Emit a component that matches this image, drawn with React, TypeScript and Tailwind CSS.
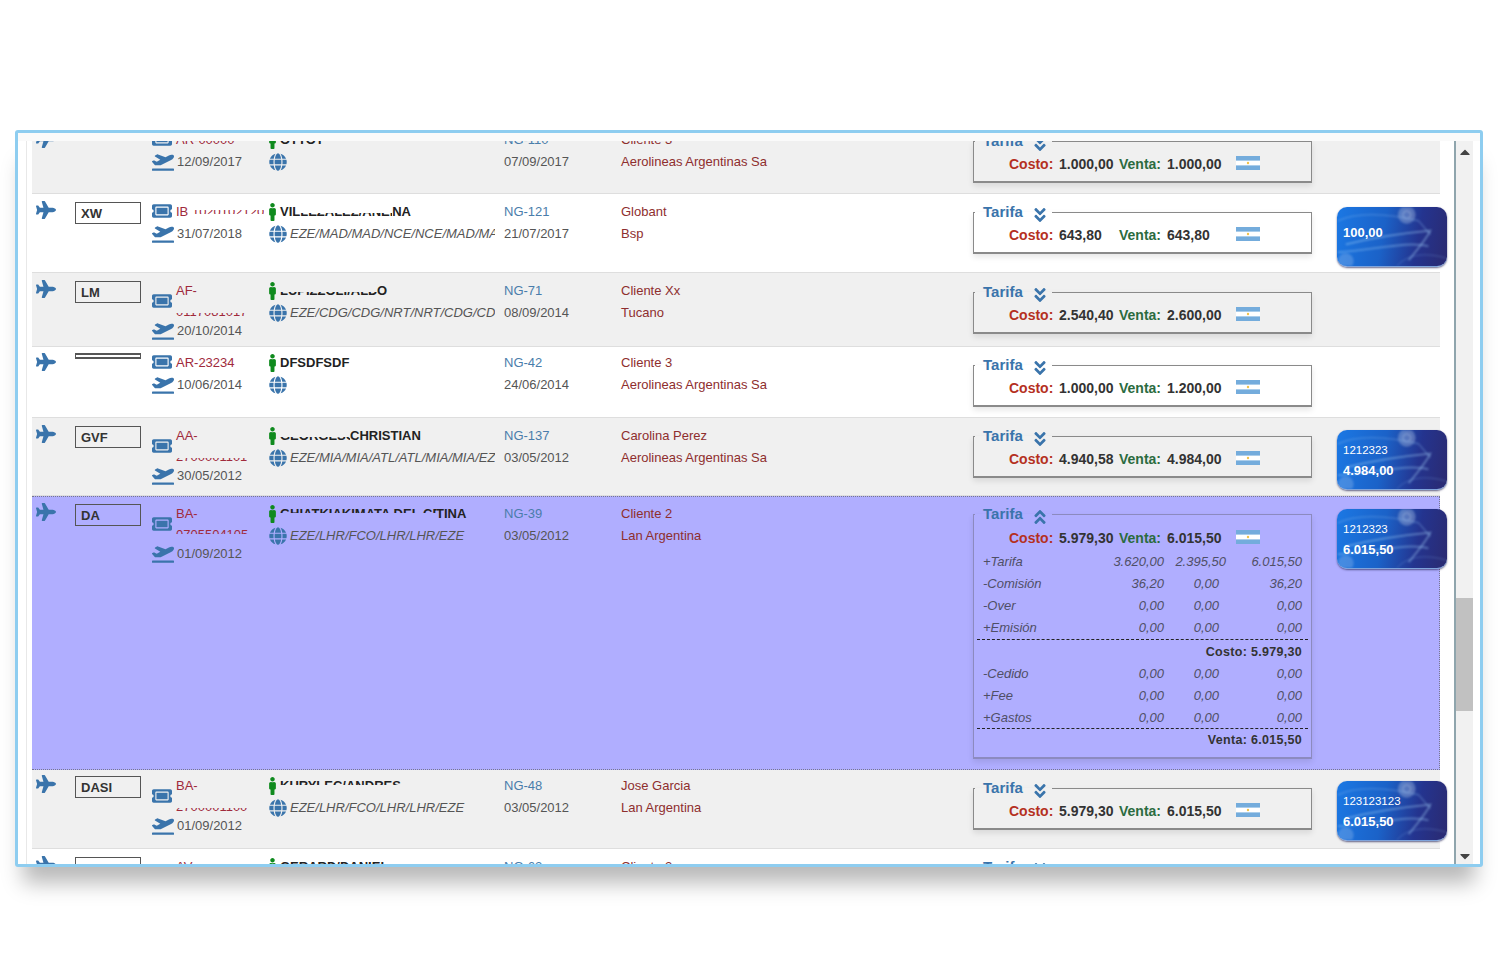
import type { ReactNode } from 'react'
import { FaPlane, FaTicketAlt, FaGlobe, FaMale, FaAngleDoubleDown, FaAngleDoubleUp, FaCaretUp, FaCaretDown, FaPlaneDeparture } from 'react-icons/fa'

// half-erased text from the screenshot: the line keeps its width, only a band shows
const lower = 'inline-block align-top whitespace-nowrap leading-[22px] [clip-path:inset(12px_0_2px_0)]'
const upper = 'inline-block align-top whitespace-nowrap leading-[22px] [clip-path:inset(5px_0_12px_0)]'
const band = 'inline-block align-top whitespace-nowrap leading-[22px] [clip-path:inset(9px_0_9px_0)]'

interface Row {
  height: string
  bg: string
  code: string
  codeBox?: string
  up?: string
  textTop?: string
  tarifaTop: string
  ticket: ReactNode
  wrapped?: boolean
  date: string
  pax: ReactNode
  route: string
  ng: string
  ngDate: string
  client: string
  airline: string
  costo: string
  venta: string
  card?: string[]
  cardTop?: string
  open?: boolean
}

const rows: Row[] = [
  {
    height: 'h-[71px]', bg: 'bg-[#f0f0f0]', code: '', codeBox: 'invisible h-[22px]', textTop: 'pt-[6px]', tarifaTop: 'pt-[8px]',
    ticket: 'AR-00000', date: '12/09/2017', pax: 'OTTOT', route: '', ng: 'NG-110', ngDate: '07/09/2017',
    client: 'Cliente 3', airline: 'Aerolineas Argentinas Sa', costo: '1.000,00', venta: '1.000,00',
  },
  {
    height: 'h-[79px]', bg: 'bg-white', code: 'XW', tarifaTop: 'pt-[8px]',
    ticket: <>IB <span className={band}>1020102120</span></>, date: '31/07/2018',
    pax: <>VIL<span className={`${lower} w-[92px] overflow-hidden`}>LEZALEZ/ANELIANA</span>NA</>,
    route: 'EZE/MAD/MAD/NCE/NCE/MAD/MAD/EZE', ng: 'NG-121', ngDate: '21/07/2017',
    client: 'Globant', airline: 'Bsp', costo: '643,80', venta: '643,80', card: ['100,00'], cardTop: 'mt-[13px]',
  },
  {
    height: 'h-[74px]', bg: 'bg-[#f0f0f0]', code: 'LM', tarifaTop: 'pt-[9px]', wrapped: true,
    ticket: <>AF-<br /><span className={lower}>0117081017</span></>, date: '20/10/2014',
    pax: <><span className={`${lower} w-[97px] overflow-hidden`}>LUPIZZOLI/ALDO</span>O</>,
    route: 'EZE/CDG/CDG/NRT/NRT/CDG/CDG/EZE', ng: 'NG-71', ngDate: '08/09/2014',
    client: 'Cliente Xx', airline: 'Tucano', costo: '2.540,40', venta: '2.600,00',
  },
  {
    height: 'h-[71px]', bg: 'bg-white', code: '', codeBox: 'h-[6px] -mt-[1px] border-y-2', up: '-mt-[1px]', textTop: 'pt-[6px]', tarifaTop: 'pt-[8px]',
    ticket: 'AR-23234', date: '10/06/2014', pax: 'DFSDFSDF', route: '', ng: 'NG-42', ngDate: '24/06/2014',
    client: 'Cliente 3', airline: 'Aerolineas Argentinas Sa', costo: '1.000,00', venta: '1.200,00',
  },
  {
    height: 'h-[78px]', bg: 'bg-[#f0f0f0]', code: 'GVF', tarifaTop: 'pt-[8px]', wrapped: true,
    ticket: <>AA-<br /><span className={lower}>2700001101</span></>, date: '30/05/2012',
    pax: <><span className={`${lower} w-[70px] overflow-hidden`}>GEORGESCU/</span>CHRISTIAN</>,
    route: 'EZE/MIA/MIA/ATL/ATL/MIA/MIA/EZE', ng: 'NG-137', ngDate: '03/05/2012',
    client: 'Carolina Perez', airline: 'Aerolineas Argentinas Sa', costo: '4.940,58', venta: '4.984,00',
    card: ['1212323', '4.984,00'], cardTop: 'mt-[12px]',
  },
  {
    height: 'h-[274px]', bg: 'bg-[#b0aeff]', code: 'DA', up: '-mt-[1px]', tarifaTop: 'pt-[7px]', wrapped: true, open: true,
    ticket: <>BA-<br /><span className={upper}>0705504105</span></>, date: '01/09/2012',
    pax: <><span className={`${upper} w-[156px] overflow-hidden`}>GHIATKIAKIMATA DEL CRIS</span>TINA</>,
    route: 'EZE/LHR/FCO/LHR/LHR/EZE', ng: 'NG-39', ngDate: '03/05/2012',
    client: 'Cliente 2', airline: 'Lan Argentina', costo: '5.979,30', venta: '6.015,50',
    card: ['1212323', '6.015,50'], cardTop: 'mt-[12px]',
  },
  {
    height: 'h-[79px]', bg: 'bg-[#f0f0f0]', code: 'DASI', up: '-mt-[2px]', tarifaTop: 'pt-[8px]', wrapped: true,
    ticket: <>BA-<br /><span className={lower}>2700001100</span></>, date: '01/09/2012',
    pax: <span className={upper}>KURYLEC/ANDRES</span>,
    route: 'EZE/LHR/FCO/LHR/LHR/EZE', ng: 'NG-48', ngDate: '03/05/2012',
    client: 'Jose Garcia', airline: 'Lan Argentina', costo: '5.979,30', venta: '6.015,50',
    card: ['123123123', '6.015,50'], cardTop: 'mt-[11px]',
  },
  {
    height: 'h-[78px]', bg: 'bg-white', code: 'FAFFFW', tarifaTop: 'pt-[8px]', wrapped: true,
    ticket: <>AV-<br />0000000000</>, date: '01/09/2012', pax: 'GERARD/DANIEL',
    route: 'EZE/LHR/FCO/LHR/LHR/EZE', ng: 'NG-62', ngDate: '03/05/2012',
    client: 'Cliente 2', airline: 'Lan Argentina', costo: '5.979,30', venta: '6.015,50',
  },
]

const breakdownTop = [
  ['+Tarifa', '3.620,00', '2.395,50', '6.015,50'],
  ['-Comisión', '36,20', '0,00', '36,20'],
  ['-Over', '0,00', '0,00', '0,00'],
  ['+Emisión', '0,00', '0,00', '0,00'],
]
const breakdownBottom = [
  ['-Cedido', '0,00', '0,00', '0,00'],
  ['+Fee', '0,00', '0,00', '0,00'],
  ['+Gastos', '0,00', '0,00', '0,00'],
]

function Flag() {
  return (
    <svg width="24" height="14" viewBox="0 0 24 14" className="shrink-0 -mt-[3px]">
      <rect width="24" height="14" fill="#fff" />
      <rect width="24" height="4.6" fill="#74acdc" />
      <rect y="9.4" width="24" height="4.6" fill="#74acdc" />
      <circle cx="12" cy="7" r="1.2" fill="#f0c24a" />
    </svg>
  )
}

function Card({ lines }: { lines: string[] }) {
  return (
    <div className="relative w-[110px] h-[60px] rounded-[10px] overflow-hidden bg-[linear-gradient(100deg,#1b78e4_0%,#1b62c8_42%,#24348f_72%,#2b2a70_100%)] shadow-[0_1px_2px_rgba(40,40,90,0.7)] border-b border-[#7fa4dc] text-white">
      <svg viewBox="0 0 110 60" className="absolute inset-0 w-full h-full blur-[1px]">
        <circle cx="70" cy="8" r="9" fill="#a9bde0" opacity="0.4" />
        <circle cx="70" cy="8" r="4" fill="none" stroke="#dbe6f7" strokeWidth="1" opacity="0.4" />
        <circle cx="8" cy="55" r="8" fill="#a9c8ee" opacity="0.3" />
        <path d="M0 46 C35 44 72 34 92 40" stroke="#9ccaf5" strokeWidth="2" fill="none" opacity="0.4" />
        <path d="M8 38 C40 30 72 26 94 24 C90 32 82 42 72 54" stroke="#a5d0f7" strokeWidth="1.8" fill="none" opacity="0.45" />
        <path d="M0 14 C22 4 56 8 82 14 L94 28" stroke="#8dbcf0" strokeWidth="1.4" fill="none" opacity="0.35" />
        <path d="M60 60 C70 48 90 46 110 52" stroke="#8dbcf0" strokeWidth="1" fill="none" opacity="0.3" />
      </svg>
      {lines.length === 1 ? (
        <div className="absolute left-[6px] top-[18px] text-[13px] leading-[16px] font-bold">{lines[0]}</div>
      ) : (
        <div className="absolute left-[6px] top-[10px]">
          <div className="text-[11.5px] leading-[20px]">{lines[0]}</div>
          <div className="text-[13px] leading-[22px] font-bold">{lines[1]}</div>
        </div>
      )}
    </div>
  )
}

function Breakdown({ items }: { items: string[][] }) {
  return (
    <>
      {items.map((b) => (
        <div key={b[0]} className="flex h-[22px] items-center italic text-[13px] text-[#4f4f66] pl-[9px]">
          <span className="w-[100px]">{b[0]}</span>
          <span className="w-[81px] text-right">{b[1]}</span>
          <span className="w-[55px] text-right">
            <span className={b[2].length > 4 ? '-mr-[7px] inline-block' : ''}>{b[2]}</span>
          </span>
          <span className="w-[83px] text-right">{b[3]}</span>
        </div>
      ))}
    </>
  )
}

function Tarifa({ row }: { row: Row }) {
  return (
    <fieldset className={`w-[339px] border border-b-2 shadow-[0_3px_6px_rgba(0,0,0,0.1)] ${row.open ? 'border-[#8c8abf] pb-[5px]' : 'border-[#8a8a8a] pb-[3px]'}`}>
      <legend className="ml-[1px] pl-[8px] pr-[3px] h-[20px] flex items-center gap-[8px] text-[15px] font-bold text-[#3a74ab]">
        Tarifa
        {row.open ? <FaAngleDoubleUp size={18} className="mt-[5px]" /> : <FaAngleDoubleDown size={18} className="mt-[5px]" />}
      </legend>
      <div className={`flex items-center pl-[35px] text-[14px] font-bold text-[#333] ${row.open ? 'h-[28px]' : 'h-[27px]'}`}>
        <span className="w-[50px] text-[#b5301f]">Costo:</span>
        <span className="w-[60px]">{row.costo}</span>
        <span className="w-[48px] text-[#2b6b3f]">Venta:</span>
        <span className="w-[69px]">{row.venta}</span>
        <Flag />
      </div>
      {row.open && (
        <div className="-mt-[1px]">
          <Breakdown items={breakdownTop} />
          <div className="mx-[3px] border-t border-dashed border-[#222]" />
          <div className="h-[23px] pt-[1px] flex items-center justify-end pr-[9px] text-[12.5px] font-bold tracking-[0.3px] text-[#333]">Costo: 5.979,30</div>
          <Breakdown items={breakdownBottom} />
          <div className="-mt-[1px] mx-[3px] border-t border-dashed border-[#222]" />
          <div className="h-[23px] flex items-center justify-end pr-[9px] text-[12.5px] font-bold tracking-[0.3px] text-[#333]">Venta: 6.015,50</div>
        </div>
      )}
    </fieldset>
  )
}

function BookingRow({ row }: { row: Row }) {
  const textTop = row.textTop ?? 'pt-[7px]'
  return (
    <div className={`flex shrink-0 ${row.height} ${row.bg} ${row.open ? 'border-y border-r border-dotted border-[#77778f]' : 'border-b border-[#dedede]'}`}>
      <div className={`w-[43px] shrink-0 pl-[4px] pt-[6px] text-[#3a74ab] ${row.up ?? ''}`}>
        <FaPlane size={20} />
      </div>
      <div className={`w-[77px] shrink-0 pt-[8px] ${row.up ?? ''}`}>
        <div className={`w-[66px] border border-[#555] overflow-hidden pl-[5px] text-[13px] leading-[21px] font-bold text-[#333] ${row.codeBox ?? 'h-[22px]'}`}>{row.code}</div>
      </div>
      <div className={`w-[116px] shrink-0 ${row.up ?? ''}`}>
        <div className={`flex items-center ${row.wrapped ? 'pt-[8px]' : textTop}`}>
          <FaTicketAlt size={20} className="w-[20px] h-[20px] shrink-0 text-[#3a74ab] -mt-[2px]" />
          <div className={`pl-[4px] text-[13px] text-[#a02a3c] whitespace-nowrap overflow-hidden ${row.wrapped ? 'leading-[20px]' : 'leading-[22px]'}`}>{row.ticket}</div>
        </div>
        <div className={`flex items-center h-[22px] text-[13px] text-[#555] ${row.wrapped ? '-mt-[3px]' : ''}`}>
          <FaPlaneDeparture size={22} className="shrink-0 text-[#3a74ab]" />
          <span className="pl-[3px]">{row.date}</span>
        </div>
      </div>
      <div className={`w-[236px] shrink-0 ${textTop} ${row.up ?? ''}`}>
        <div className="flex items-center h-[22px] text-[13px] leading-[22px] font-bold text-[#222]">
          <FaMale size={18} className="w-[9px] shrink-0 text-[#0f8a1e]" />
          <span className="pl-[3px] whitespace-nowrap">{row.pax}</span>
        </div>
        <div className="flex items-center h-[22px] text-[13px] italic text-[#555]">
          <FaGlobe size={18} className="shrink-0 ml-[1px] text-[#3a74ab]" />
          <span className="pl-[3px] w-[208px] overflow-hidden whitespace-nowrap">{row.route}</span>
        </div>
      </div>
      <div className={`w-[117px] shrink-0 ${textTop} text-[13px] leading-[22px] ${row.up ?? ''}`}>
        <div className="text-[#4a7dab]">{row.ng}</div>
        <div className="text-[#555]">{row.ngDate}</div>
      </div>
      <div className={`w-[352px] shrink-0 ${textTop} text-[13px] leading-[22px] text-[#8e2e2e] ${row.up ?? ''}`}>
        <div>{row.client}</div>
        <div>{row.airline}</div>
      </div>
      <div className={`w-[364px] shrink-0 ${row.tarifaTop}`}>
        <Tarifa row={row} />
      </div>
      {row.card && (
        <div className={`w-[110px] shrink-0 ${row.cardTop}`}>
          <Card lines={row.card} />
        </div>
      )}
    </div>
  )
}

export default function App() {
  return (
    <div className="w-[1500px] h-[980px] bg-white pt-[130px] pl-[15px] font-['Liberation_Sans',Arial,sans-serif]">
      <div className="w-[1468px] h-[737px] border-[3px] border-[#8ecdf0] rounded-[3px] bg-white shadow-[0_24px_20px_-8px_rgba(0,0,0,0.28)] flex flex-col overflow-hidden">
        <div className="h-[8px] shrink-0 bg-[#fafafa]" />
        <div className="flex flex-1 min-h-0">
          <div className="w-[14px] shrink-0 pl-[8px]">
            <div className="h-full w-px bg-[#e8e8e8]" />
          </div>
          <div className="w-[1422px] shrink-0 overflow-hidden">
            <div className="w-[1408px] flex flex-col -mt-[18px]">
              {rows.map((row, idx) => (
                <BookingRow key={idx} row={row} />
              ))}
            </div>
          </div>
          <div className="w-[26px] shrink-0 border-l-2 border-[#8fa5ad] flex">
            <div className="w-[17px] bg-[#f1f1f1] flex flex-col items-center text-[#444]">
              <div className="h-[22px] flex items-center justify-center"><FaCaretUp size={16} /></div>
              <div className="w-full h-[113px] mt-[435px] bg-[#c1c1c1]" />
              <div className="mt-auto h-[16px] flex items-center justify-center"><FaCaretDown size={16} /></div>
            </div>
          </div>
        </div>
      </div>
    </div>
  )
}
